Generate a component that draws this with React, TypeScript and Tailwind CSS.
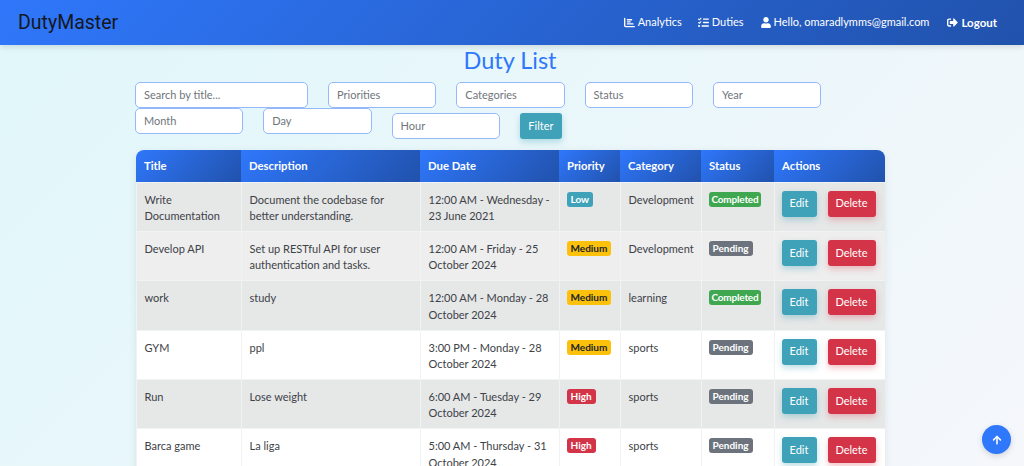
import React from "react";
import { FaSignOutAlt, FaUser, FaArrowUp } from "react-icons/fa";
import { FaChartBar, FaListCheck } from "react-icons/fa6";

const rows = [
  { t: "Write Documentation", d: "Document the codebase for better understanding.", due: "12:00 AM - Wednesday - 23 June 2021", p: "Low", c: "Development", s: "Completed" },
  { t: "Develop API", d: "Set up RESTful API for user authentication and tasks.", due: "12:00 AM - Friday - 25 October 2024", p: "Medium", c: "Development", s: "Pending" },
  { t: "work", d: "study", due: "12:00 AM - Monday - 28 October 2024", p: "Medium", c: "learning", s: "Completed" },
  { t: "GYM", d: "ppl", due: "3:00 PM - Monday - 28 October 2024", p: "Medium", c: "sports", s: "Pending" },
  { t: "Run", d: "Lose weight", due: "6:00 AM - Tuesday - 29 October 2024", p: "High", c: "sports", s: "Pending" },
  { t: "Barca game", d: "La liga", due: "5:00 AM - Thursday - 31 October 2024", p: "High", c: "sports", s: "Pending" },
];

const heads: [string, string][] = [
  ["Title", "w-[105px]"],
  ["Description", "w-[179px]"],
  ["Due Date", "w-[139px]"],
  ["Priority", "w-[61px]"],
  ["Category", "w-[81px]"],
  ["Status", "w-[73px]"],
  ["Actions", "w-[111px]"],
];

function priorityClass(p: string) {
  if (p === "Low") return "bg-[#3fa2b8] text-white";
  if (p === "Medium") return "bg-[#fcc10a] text-[#212529]";
  return "bg-[#d33447] text-white";
}

function statusClass(s: string) {
  return s === "Completed"
    ? "bg-[#3ea74f] text-white px-[3px] tracking-[-0.2px]"
    : "bg-[#6c737c] text-white px-[4px]";
}

function Field({ label, w, extra }: { label: string; w: string; extra?: string }) {
  return (
    <div className={`h-[26px] ${w} ${extra ?? ""} flex items-center rounded-[5px] border border-[#94b9fb] bg-white px-2 text-[11px] text-[#6f757b]`}>
      {label}
    </div>
  );
}

export default function App() {
  return (
    <div className="relative h-[466px] w-[1024px] overflow-hidden bg-[linear-gradient(135deg,#e0f7fa,#f5f7fb)] font-['Lato',sans-serif] text-[#3d4247]">
      <nav className="flex h-[45px] items-center justify-between bg-[linear-gradient(135deg,#2f77fb,#2152ac)] pl-[18px] pr-[27px] shadow-[0_2px_6px_rgba(0,0,0,0.12)]">
        <span className="font-['Roboto',sans-serif] text-[19.5px] text-[#14181f]">DutyMaster</span>
        <div className="flex items-center text-[11px] text-white">
          <span className="flex items-center gap-[3px]"><FaChartBar className="h-[11px] w-[11px]" />Analytics</span>
          <span className="ml-[16px] flex items-center gap-[3px]"><FaListCheck className="h-[11px] w-[11px]" />Duties</span>
          <span className="ml-[17px] flex items-center gap-[3px]"><FaUser className="h-[11px] w-[10px]" />Hello, omaradlymms@gmail.com</span>
          <span className="ml-[18px] flex items-center gap-[3px] text-[11.5px] font-bold"><FaSignOutAlt className="h-[11px] w-[11px]" />Logout</span>
        </div>
      </nav>

      <h1 className="mt-[1px] pr-[4px] text-center text-[23.5px] leading-[28px] text-[#2f77fb]">Duty List</h1>

      <div className="ml-[135px] mt-[8px] flex w-[720px] flex-wrap items-start gap-x-5">
        <Field label="Search by title..." w="w-[173px]" />
        <Field label="Priorities" w="w-[108.3px]" />
        <Field label="Categories" w="w-[108.3px]" />
        <Field label="Status" w="w-[108.3px]" />
        <Field label="Year" w="w-[108.3px]" />
        <Field label="Month" w="w-[108.3px]" />
        <Field label="Day" w="w-[108.3px]" />
        <Field label="Hour" w="w-[108.3px]" extra="mt-[5px]" />
        <button className="mt-[5px] h-[26px] w-[42px] rounded-[3px] bg-[#3fa2b8] text-[11px] text-white shadow-[0_3px_6px_rgba(63,162,184,0.35)]">Filter</button>
      </div>

      <div className="ml-[135.5px] mt-[11px] w-[749px] overflow-hidden rounded-t-[8px] shadow-[0_2px_8px_rgba(0,0,0,0.08)]">
        <table className="w-full table-fixed border-collapse text-[11px] leading-[16.4px]">
          <thead>
            <tr>
              {heads.map(([h, w]) => (
                <th key={h} className={`${w} h-[32px] bg-[linear-gradient(135deg,#2f77fb,#2152ac)] px-2 text-left text-[11.3px] font-bold text-white`}>{h}</th>
              ))}
            </tr>
          </thead>
          <tbody>
            {rows.map((r, i) => (
              <tr key={r.t} className={`h-[49.4px] ${i % 2 === 0 ? "bg-[#e6e7e7]" : i === 1 ? "bg-[#eeeeee]" : "bg-white"}`}>
                <td className="border border-[#f0f3f3] px-2 pt-[9px] align-top">{r.t}</td>
                <td className="border border-[#f0f3f3] px-2 pt-[9px] align-top">{r.d}</td>
                <td className="border border-[#f0f3f3] px-2 pt-[9px] align-top">{r.due}</td>
                <td className="border border-[#f0f3f3] pl-[7px] pr-2 pt-[8px] align-top">
                  <span className={`inline-block rounded-[3px] px-[4px] text-[10px] font-bold leading-[15px] ${priorityClass(r.p)}`}>{r.p}</span>
                </td>
                <td className="border border-[#f0f3f3] px-2 pt-[9px] align-top">{r.c}</td>
                <td className="border border-[#f0f3f3] pl-[7px] pr-2 pt-[8px] align-top">
                  <span className={`inline-block rounded-[3px] text-[10px] font-bold leading-[15px] ${statusClass(r.s)}`}>{r.s}</span>
                </td>
                <td className="border border-[#f0f3f3] pl-[7px] pr-2 pt-[8px] align-top">
                  <div className="flex gap-[11px]">
                    <button className="h-[26px] w-[35px] rounded-[3px] bg-[#3fa2b8] text-[11px] text-white shadow-[0_3px_6px_rgba(63,162,184,0.35)]">Edit</button>
                    <button className="h-[26px] w-[48px] rounded-[3px] bg-[#d33447] text-[11px] text-white shadow-[0_3px_6px_rgba(211,52,71,0.3)]">Delete</button>
                  </div>
                </td>
              </tr>
            ))}
          </tbody>
        </table>
      </div>

      <button className="absolute left-[982px] top-[425px] flex h-[29px] w-[29px] items-center justify-center rounded-full bg-[#2f77fb] text-white shadow-[0_2px_6px_rgba(0,0,0,0.15)]">
        <FaArrowUp className="h-[10px] w-[10px]" />
      </button>
    </div>
  );
}
